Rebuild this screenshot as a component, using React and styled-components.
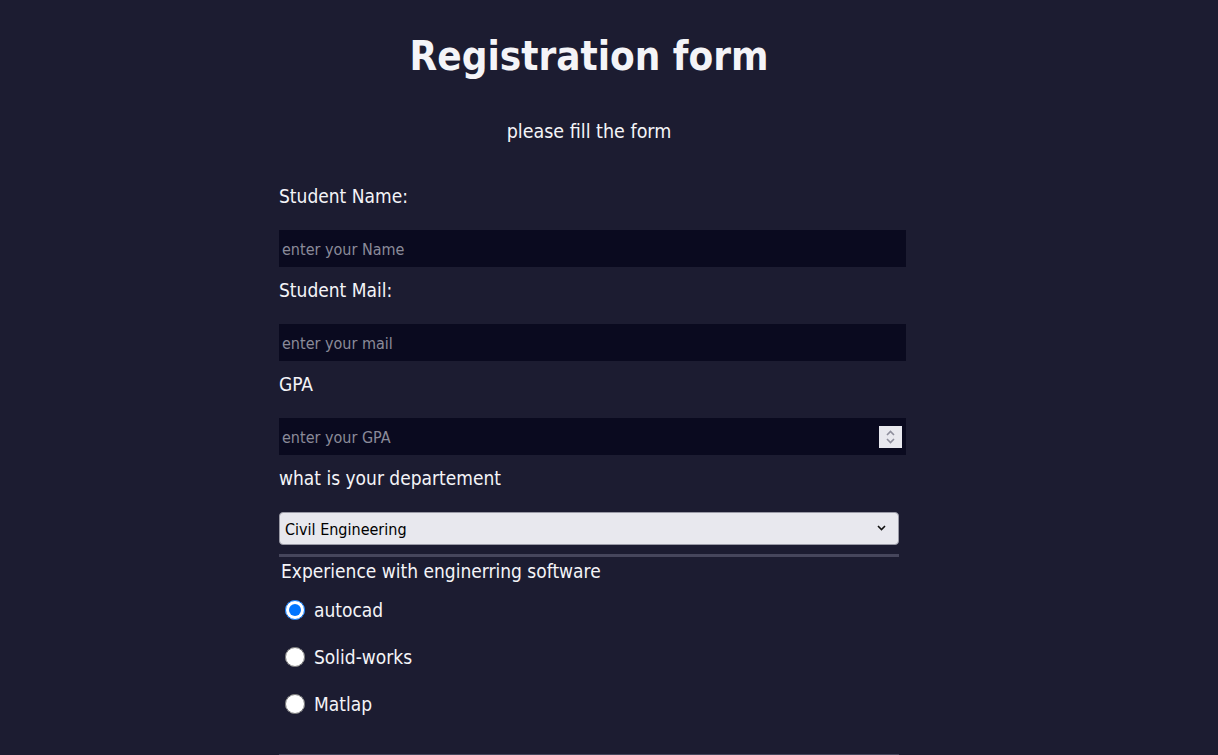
import React from 'react';
import styled, { createGlobalStyle } from 'styled-components';

const GlobalStyle = createGlobalStyle`
  body {
    margin: 0;
    background-color: #1c1c31;
    color: #f4f4f8;
    font-family: "DejaVu Sans Condensed", "DejaVu Sans", sans-serif;
  }
`;

const Page = styled.div`
  min-height: 755px;
  display: flex;
  justify-content: center;
  padding-top: 32px;
  padding-right: 40px;
  box-sizing: border-box;
`;

const Form = styled.form`
  width: 620px;
  display: flex;
  flex-direction: column;
`;

const Title = styled.h1`
  margin: 0;
  font-size: 40px;
  line-height: 48px;
  font-weight: bold;
  text-align: center;
`;

const Subtitle = styled.p`
  margin: 40px 0 40px;
  font-size: 19.5px;
  line-height: 24px;
  text-align: center;
`;

const Label = styled.label`
  font-size: 19px;
  line-height: 24px;
  margin-top: ${(p) => (p.first ? '0' : '11px')};
  margin-bottom: 22px;
`;

const Field = styled.div`
  position: relative;
  width: 627px;
`;

const TextInput = styled.input`
  display: block;
  width: 627px;
  height: 37px;
  box-sizing: border-box;
  margin: 0;
  padding: 2px 4px 0 3px;
  border: none;
  outline: none;
  background-color: #0a0a1f;
  color: #f4f4f8;
  font-family: inherit;
  font-size: 16px;
  -moz-appearance: textfield;

  &::placeholder {
    color: #8a8a99;
  }

  &::-webkit-inner-spin-button,
  &::-webkit-outer-spin-button {
    -webkit-appearance: none;
    margin: 0;
  }
`;

const Spinner = styled.div`
  position: absolute;
  top: 8px;
  right: 4px;
  width: 23px;
  height: 22px;
  background-color: #e8e8ee;
  display: flex;
  align-items: center;
  justify-content: center;
`;

const SelectWrap = styled.div`
  position: relative;
  width: 620px;
`;

const Select = styled.select`
  display: block;
  width: 620px;
  height: 33px;
  margin: 0;
  padding: 2px 5px 0;
  border: 1px solid #9a9aa6;
  border-radius: 4px;
  background-color: #e8e8ee;
  color: #000;
  font-family: inherit;
  font-size: 16px;
  appearance: none;
  -webkit-appearance: none;
`;

const Caret = styled.svg`
  position: absolute;
  top: 13px;
  right: 13px;
  pointer-events: none;
`;

const Rule = styled.div`
  width: 620px;
  height: 3px;
  margin-top: 9px;
  background-color: #46465c;
`;

const Legend = styled.div`
  font-size: 19px;
  line-height: 24px;
  margin: 2px 0 0 2px;
`;

const Options = styled.div`
  display: flex;
  flex-direction: column;
  gap: 23px;
  margin-top: 15px;
`;

const Option = styled.label`
  display: flex;
  align-items: center;
  gap: 9px;
  font-size: 19px;
  line-height: 24px;
  padding-left: 6px;
`;

const Radio = styled.input`
  width: 20px;
  height: 20px;
  margin: 0;
`;

const BottomRule = styled.div`
  width: 620px;
  height: 2px;
  margin-top: 38px;
  background-color: #46465c;
`;

export default function App() {
  return (
    <>
      <GlobalStyle />
      <Page>
        <Form onSubmit={(e) => e.preventDefault()}>
          <Title>Registration form</Title>
          <Subtitle>please fill the form</Subtitle>

          <Label first htmlFor="name">Student Name:</Label>
          <TextInput id="name" type="text" placeholder="enter your Name" />

          <Label htmlFor="mail">Student Mail:</Label>
          <TextInput id="mail" type="email" placeholder="enter your mail" />

          <Label htmlFor="gpa">GPA</Label>
          <Field>
            <TextInput id="gpa" type="number" placeholder="enter your GPA" />
            <Spinner>
              <svg width="11" height="16" viewBox="0 0 11 16" fill="none" stroke="#8e8e9c" strokeWidth="1.6">
                <path d="M2 6 L5.5 2.5 L9 6" />
                <path d="M2 10 L5.5 13.5 L9 10" />
              </svg>
            </Spinner>
          </Field>

          <Label htmlFor="dep">what is your departement</Label>
          <SelectWrap>
            <Select id="dep" defaultValue="civil">
              <option value="civil">Civil Engineering</option>
              <option value="mech">Mechanical Engineering</option>
              <option value="elec">Electrical Engineering</option>
            </Select>
            <Caret width="9" height="6" viewBox="0 0 9 6" fill="none" stroke="#111" strokeWidth="1.6">
              <path d="M1 1 L4.5 4.5 L8 1" />
            </Caret>
          </SelectWrap>

          <Rule />
          <Legend>Experience with enginerring software</Legend>
          <Options>
            <Option>
              <Radio type="radio" name="soft" defaultChecked />
              autocad
            </Option>
            <Option>
              <Radio type="radio" name="soft" />
              Solid-works
            </Option>
            <Option>
              <Radio type="radio" name="soft" />
              Matlap
            </Option>
          </Options>
          <BottomRule />
        </Form>
      </Page>
    </>
  );
}
